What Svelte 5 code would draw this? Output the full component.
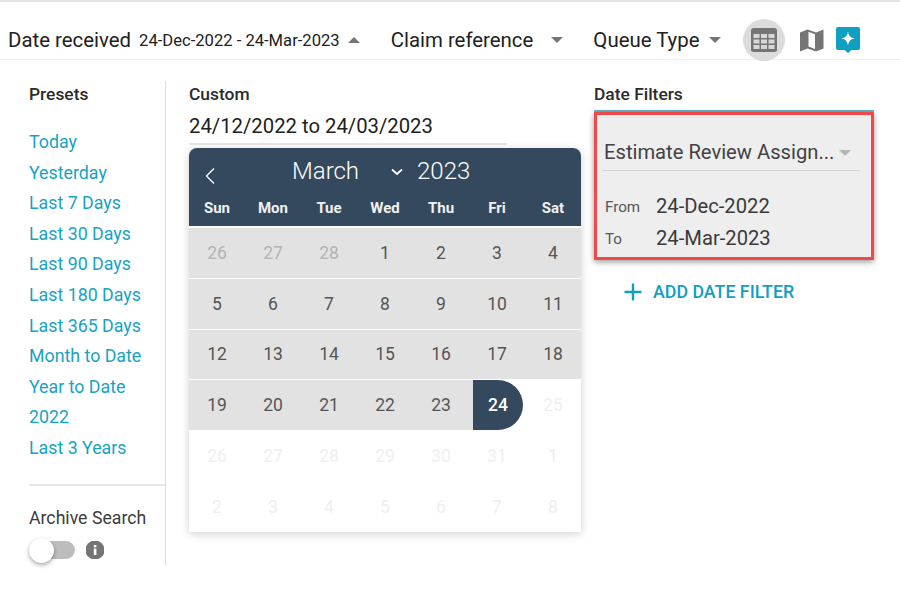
<script>
  const presets = ['Today', 'Yesterday', 'Last 7 Days', 'Last 30 Days', 'Last 90 Days', 'Last 180 Days', 'Last 365 Days', 'Month to Date', 'Year to Date', '2022', 'Last 3 Years'];
  const weekdays = ['Sun', 'Mon', 'Tue', 'Wed', 'Thu', 'Fri', 'Sat'];
  const prev = [26, 27, 28];
  const days = [];
  for (const d of prev) days.push({ d, cls: 'range muted' });
  for (let d = 1; d <= 23; d++) days.push({ d, cls: 'range' });
  days.push({ d: 24, cls: 'end' });
  for (let d = 25; d <= 31; d++) days.push({ d, cls: 'off' });
  for (let d = 1; d <= 8; d++) days.push({ d, cls: 'off' });
</script>

<div class="page">
  <header class="bar">
    <span class="label">Date received</span>
    <span class="range-text">24-Dec-2022 - 24-Mar-2023</span>
    <span class="caret up"></span>
    <span class="label claim">Claim reference</span>
    <span class="caret claim-caret"></span>
    <span class="label queue">Queue Type</span>
    <span class="caret queue-caret"></span>
    <span class="view-btn">
      <svg width="26" height="24" viewBox="0 0 26 24">
        <rect width="26" height="24" rx="2.5" fill="#757575" />
        <g fill="#d8d8d8">
          <rect x="2.5" y="6" width="6" height="4" /><rect x="10" y="6" width="6" height="4" /><rect x="17.5" y="6" width="6" height="4" />
          <rect x="2.5" y="11.5" width="6" height="4" /><rect x="10" y="11.5" width="6" height="4" /><rect x="17.5" y="11.5" width="6" height="4" />
          <rect x="2.5" y="17" width="6" height="4" /><rect x="10" y="17" width="6" height="4" /><rect x="17.5" y="17" width="6" height="4" />
        </g>
      </svg>
    </span>
    <svg class="map" width="24" height="24" viewBox="0 0 24 24">
      <path fill="#757575" d="M0 4.5 7.5 1.5 16 4.5 23.5 1.5V20.5L16 23.5 7.5 20.5 0 23.5Z" />
      <path fill="#fff" d="M8.5 3.8 15 6.2V21L8.5 18.6Z" />
    </svg>
    <svg class="spark" width="24" height="26" viewBox="0 0 24 26">
      <path fill="#0f9fc0" d="M2 0H22A2 2 0 0 1 24 2V21A2 2 0 0 1 22 23H15.5L12 26 8.5 23H2A2 2 0 0 1 0 21V2A2 2 0 0 1 2 0Z" />
      <path fill="#fff" d="M12 4.5C12.8 8.8 14.2 10.6 18.5 11.5 14.2 12.4 12.8 14.2 12 18.5 11.2 14.2 9.8 12.4 5.5 11.5 9.8 10.6 11.2 8.8 12 4.5Z" />
    </svg>
  </header>

  <main class="panel">
    <aside class="presets">
      <h3>Presets</h3>
      <ul>
        {#each presets as p}
          <li>{p}</li>
        {/each}
      </ul>
      <hr />
      <div class="archive">Archive Search</div>
      <div class="toggle-row">
        <span class="toggle"><span class="knob"></span></span>
        <svg width="18" height="18" viewBox="0 0 18 18">
          <circle cx="9" cy="9" r="9.5" fill="#757575" />
          <rect x="7.8" y="7.6" width="2.6" height="6.4" fill="#fff" />
          <rect x="7.8" y="4" width="2.6" height="2.4" fill="#fff" />
        </svg>
      </div>
    </aside>

    <section class="custom">
      <h3>Custom</h3>
      <div class="input">24/12/2022 to 24/03/2023</div>
      <div class="calendar">
        <div class="cal-head">
          <div class="month-row">
            <svg class="chev-left" width="12" height="18" viewBox="0 0 12 18">
              <path d="M10 1.5 2.5 9 10 16.5" fill="none" stroke="#fff" stroke-width="1.3" />
            </svg>
            <span class="month">March</span>
            <svg class="chev-down" width="12" height="8" viewBox="0 0 12 8">
              <path d="M1 1.5 6 6 11 1.5" fill="none" stroke="#fff" stroke-width="1.8" />
            </svg>
            <span class="year">2023</span>
          </div>
          <div class="weekdays">
            {#each weekdays as w}
              <span>{w}</span>
            {/each}
          </div>
        </div>
        <div class="grid">
          {#each days as day}
            <span class="day {day.cls}">{day.d}</span>
          {/each}
        </div>
      </div>
    </section>

    <section class="filters">
      <h3>Date Filters</h3>
      <div class="card">
        <div class="select">
          <span class="select-text">Estimate Review Assign...</span>
          <span class="caret light"></span>
        </div>
        <div class="date-row first"><span class="k">From</span><span class="v">24-Dec-2022</span></div>
        <div class="date-row"><span class="k">To</span><span class="v">24-Mar-2023</span></div>
      </div>
      <div class="add">
        <svg width="20" height="20" viewBox="0 0 20 20">
          <path d="M10 1.5V18.5M1.5 10H18.5" stroke="#0f9fc0" stroke-width="2.4" fill="none" />
        </svg>
        <span>ADD DATE FILTER</span>
      </div>
    </section>
  </main>
</div>

<style>
  :global(body) {
    margin: 0;
    background: #fff;
  }
  .page {
    width: 900px;
    height: 594px;
    overflow: hidden;
    font-family: Roboto, "Liberation Sans", sans-serif;
    color: #212121;
    border-top: 2px solid #e4e4e4;
    box-sizing: border-box;
  }
  .bar {
    height: 58px;
    box-sizing: border-box;
    display: flex;
    align-items: center;
    padding: 19px 0 0 8px;
    border-bottom: 1px solid #f1f1f1;
  }
  .label {
    font-size: 20.4px;
    white-space: nowrap;
  }
  .range-text {
    font-size: 16.6px;
    margin-left: 8px;
    white-space: nowrap;
  }
  .caret {
    width: 0;
    height: 0;
    border-left: 6.5px solid transparent;
    border-right: 6.5px solid transparent;
    border-top: 6.5px solid #757575;
  }
  .caret.up {
    border-top: 0;
    border-bottom: 6.5px solid #757575;
    margin-left: 8px;
  }
  .claim-caret {
    margin-left: 18px;
  }
  .queue-caret {
    margin-left: 9px;
  }
  .caret.light {
    border-top-color: #b5b5b5;
    margin-left: 5px;
    margin-top: 3px;
  }
  .claim {
    margin-left: 31px;
  }
  .queue {
    margin-left: 30px;
  }
  .view-btn {
    width: 42px;
    height: 42px;
    border-radius: 50%;
    background: #dcdcdc;
    display: flex;
    align-items: center;
    justify-content: center;
    margin-left: 22px;
    flex: none;
  }
  .map {
    margin-left: 15px;
  }
  .spark {
    margin-left: 12px;
    margin-top: -1px;
  }
  .panel {
    display: flex;
    align-items: flex-start;
    padding-top: 21px;
  }
  h3 {
    margin: 0;
    font-size: 17.4px;
    font-weight: 500;
    line-height: 24px;
    color: #2b2b2b;
  }
  .presets {
    width: 136px;
    height: 485px;
    margin-left: 29px;
    border-right: 1px solid #dedede;
    flex: none;
    display: flex;
    flex-direction: column;
    position: relative;
  }
  .presets h3 {
    margin-top: 1px;
  }
  .presets ul {
    list-style: none;
    margin: 21px 0 0;
    padding: 0;
  }
  .presets li {
    font-size: 17.8px;
    line-height: 30.6px;
    color: #17a3c4;
    white-space: nowrap;
  }
  hr {
    border: 0;
    border-top: 2px solid #e6e6e6;
    margin: 20px 0 0;
  }
  .archive {
    margin-top: 21px;
    font-size: 17.7px;
    line-height: 22px;
    color: #3c3c3c;
    white-space: nowrap;
  }
  .toggle-row {
    display: flex;
    align-items: center;
    gap: 11px;
    margin-top: 12px;
  }
  .toggle {
    width: 46px;
    height: 18px;
    border-radius: 9px;
    background: #bdbdbd;
    position: relative;
    display: block;
  }
  .knob {
    position: absolute;
    left: 0;
    top: -3px;
    width: 25px;
    height: 25px;
    border-radius: 50%;
    background: #fff;
    box-shadow: 0 2px 4px rgba(0, 0, 0, 0.35);
  }
  .custom {
    width: 392px;
    margin-left: 23px;
    flex: none;
  }
  .custom h3 {
    margin-top: 1px;
  }
  .input {
    font-size: 20.3px;
    line-height: 28px;
    margin-top: 6px;
    padding-bottom: 3px;
    width: 318px;
    border-bottom: 2px solid #e6e6e6;
    white-space: nowrap;
  }
  .calendar {
    margin-top: 3px;
    width: 392px;
    border-radius: 8px 8px 0 0;
    box-shadow: 0 2px 10px rgba(0, 0, 0, 0.18);
    background: #fff;
  }
  .cal-head {
    background: #34495e;
    color: #fff;
    border-radius: 8px 8px 0 0;
    height: 78px;
    box-sizing: border-box;
    padding-top: 7px;
  }
  .month-row {
    height: 32px;
    display: flex;
    align-items: center;
    font-weight: 300;
    font-size: 24px;
  }
  .chev-left {
    margin-left: 15px;
    margin-top: 10px;
  }
  .month {
    margin-left: 76px;
    width: 92px;
  }
  .chev-down {
    margin-left: 7px;
    margin-top: 2px;
  }
  .year {
    margin-left: 14px;
  }
  .weekdays {
    display: grid;
    grid-template-columns: repeat(7, 1fr);
    text-align: center;
    font-size: 15px;
    font-weight: 700;
    line-height: 20px;
    margin-top: 11px;
    color: #f1f1f1;
  }
  .grid {
    display: grid;
    grid-template-columns: repeat(7, 56px);
    grid-auto-rows: 49.75px;
    row-gap: 1px;
    padding-top: 2px;
  }
  .day {
    display: flex;
    align-items: center;
    justify-content: center;
    font-size: 17.5px;
  }
  .range {
    background: #e2e2e2;
    color: #555;
  }
  .range.muted {
    color: #b4b4b4;
  }
  .end {
    background: #34495e;
    color: #fff;
    font-weight: 500;
    width: 54px;
    box-sizing: border-box;
    border-left: 4px solid #e2e2e2;
    border-radius: 0 25px 25px 0;
  }
  .off {
    color: #efefef;
  }
  .filters {
    margin-left: 13px;
    width: 278px;
    flex: none;
  }
  .filters h3 {
    margin-top: 1px;
  }
  .card {
    margin-top: 6px;
    width: 280px;
    height: 148px;
    box-sizing: border-box;
    background: #eeeeee;
    border: 3px solid #f04848;
    box-shadow: 0 2px 6px rgba(0, 0, 0, 0.4), 0 -2px 0 #62b6cc;
    padding: 0 6px;
  }
  .select {
    margin-top: 18px;
    height: 38px;
    padding-left: 1px;
    display: flex;
    align-items: center;
    border-bottom: 1px solid #d4d4d4;
    box-sizing: border-box;
    font-size: 20.2px;
    color: #424242;
    width: 257px;
  }
  .select-text {
    white-space: nowrap;
  }
  .date-row {
    display: flex;
    align-items: center;
    height: 32px;
  }
  .date-row.first {
    margin-top: 19px;
  }
  .k {
    width: 51px;
    margin-left: 2px;
    font-size: 15.2px;
    color: #555;
    padding-top: 2px;
  }
  .v {
    font-size: 20.2px;
    color: #3a3a3a;
  }
  .add {
    display: flex;
    align-items: center;
    gap: 10px;
    margin: 21px 0 0 29px;
    color: #0f9fc0;
    font-size: 17.8px;
    font-weight: 500;
    white-space: nowrap;
  }
</style>
